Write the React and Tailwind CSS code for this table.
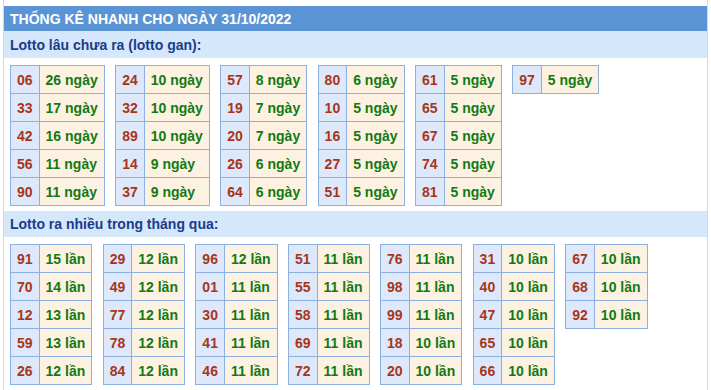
import React from "react";

const gan = [
  [["06", 26], ["33", 17], ["42", 16], ["56", 11], ["90", 11]],
  [["24", 10], ["32", 10], ["89", 10], ["14", 9], ["37", 9]],
  [["57", 8], ["19", 7], ["20", 7], ["26", 6], ["64", 6]],
  [["80", 6], ["10", 5], ["16", 5], ["27", 5], ["51", 5]],
  [["61", 5], ["65", 5], ["67", 5], ["74", 5], ["81", 5]],
  [["97", 5]],
];

const nhieu = [
  [["91", 15], ["70", 14], ["12", 13], ["59", 13], ["26", 12]],
  [["29", 12], ["49", 12], ["77", 12], ["78", 12], ["84", 12]],
  [["96", 12], ["01", 11], ["30", 11], ["41", 11], ["46", 11]],
  [["51", 11], ["55", 11], ["58", 11], ["69", 11], ["72", 11]],
  [["76", 11], ["98", 11], ["99", 11], ["18", 10], ["20", 10]],
  [["31", 10], ["40", 10], ["47", 10], ["65", 10], ["66", 10]],
  [["67", 10], ["68", 10], ["92", 10]],
];

function Table({ rows, unit }) {
  return (
    <div className="grid grid-cols-[auto_auto] self-start border-t border-l border-[#8db0e2]">
      {rows.map(([n, v], i) => (
        <React.Fragment key={i}>
          <div className="h-[28px] flex items-center justify-center px-[6px] border-r border-b border-[#8db0e2] bg-[#dde9fb] text-[#a8351a]">
            {n}
          </div>
          <div className="h-[28px] flex items-center px-[6px] border-r border-b border-[#8db0e2] bg-[#fdf2e1] text-[#127a14]">
            {v} {unit}
          </div>
        </React.Fragment>
      ))}
    </div>
  );
}

export default function App() {
  return (
    <div
      className="w-[711px] h-[390px] bg-white overflow-hidden"
      style={{ fontFamily: '"Liberation Sans", Arial, sans-serif' }}
    >
      <div className="ml-[3px] w-[705px] h-[390px] border-l border-r border-[#d4d9e0] pt-[6px] text-[14px] font-bold leading-none">
        <div className="h-[25px] bg-[#5b94d5] text-white flex items-center px-[6px] pt-[1px]">
          THỐNG KÊ NHANH CHO NGÀY 31/10/2022
        </div>
        <div className="h-[27px] bg-[#d5e7fb] text-[#1b3b8b] flex items-center px-[6px]">
          Lotto lâu chưa ra (lotto gan):
        </div>
        <div className="flex gap-[10.4px] px-[6px] mt-[7px]">
          {gan.map((t, i) => (
            <Table key={i} rows={t} unit="ngày" />
          ))}
        </div>
        <div className="h-[26px] mt-[5px] bg-[#d5e7fb] text-[#1b3b8b] flex items-center px-[6px]">
          Lotto ra nhiều trong tháng qua:
        </div>
        <div className="flex gap-[10.4px] px-[6px] mt-[7px]">
          {nhieu.map((t, i) => (
            <Table key={i} rows={t} unit="lần" />
          ))}
        </div>
      </div>
    </div>
  );
}
